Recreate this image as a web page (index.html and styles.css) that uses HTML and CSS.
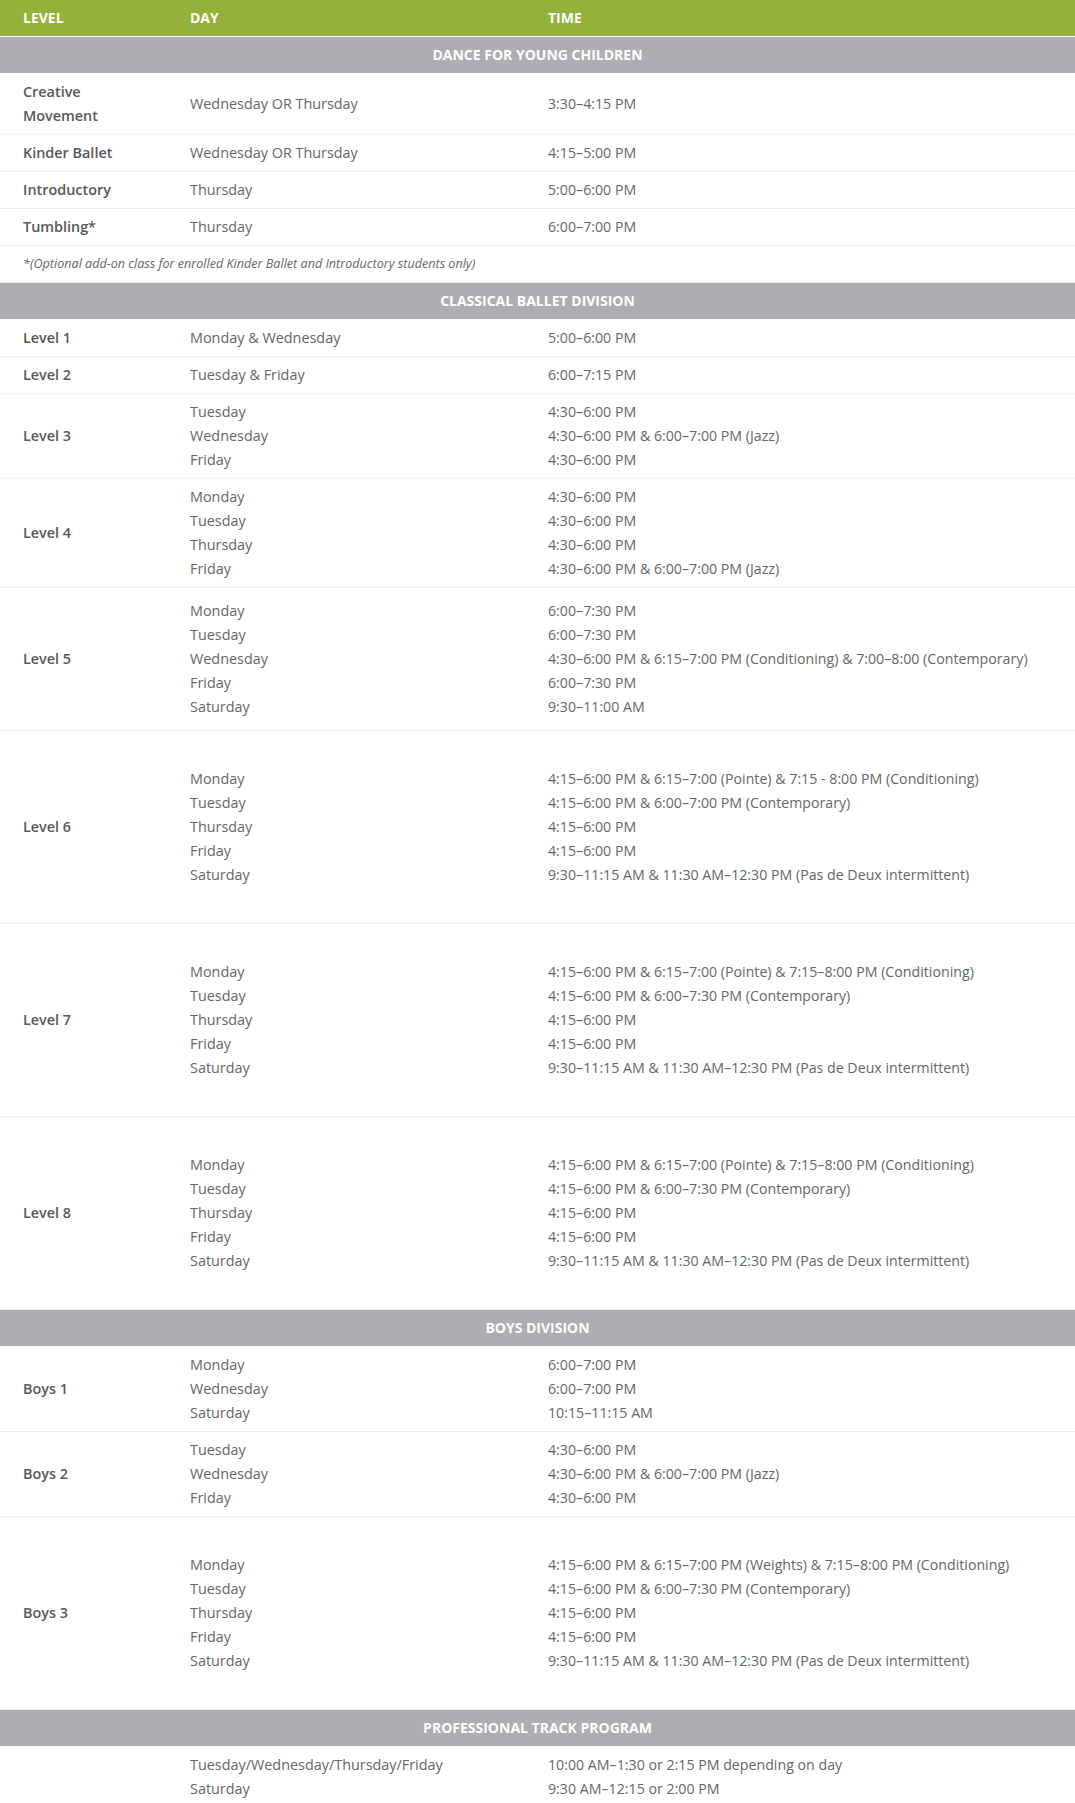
FILE: index.html
```html
<!DOCTYPE html>
<html lang="en">
<head>
<meta charset="utf-8">
<title>Class Schedule</title>
<link rel="stylesheet" href="styles.css">
</head>
<body>
<table class="schedule">
  <colgroup>
    <col class="col-level">
    <col class="col-day">
    <col class="col-time">
  </colgroup>
  <thead>
    <tr class="head">
      <th>LEVEL</th>
      <th>DAY</th>
      <th>TIME</th>
    </tr>
  </thead>
  <tbody>
    <tr class="section"><td colspan="3">DANCE FOR YOUNG CHILDREN</td></tr>
    <tr><td class="level">Creative Movement</td><td>Wednesday OR Thursday</td><td class="time">3:30–4:15 PM</td></tr>
    <tr><td class="level">Kinder Ballet</td><td>Wednesday OR Thursday</td><td class="time">4:15–5:00 PM</td></tr>
    <tr><td class="level">Introductory</td><td>Thursday</td><td class="time">5:00–6:00 PM</td></tr>
    <tr><td class="level">Tumbling*</td><td>Thursday</td><td class="time">6:00–7:00 PM</td></tr>
    <tr><td class="note" colspan="3">*(Optional add-on class for enrolled Kinder Ballet and Introductory students only)</td></tr>

    <tr class="section"><td colspan="3">CLASSICAL BALLET DIVISION</td></tr>
    <tr><td class="level">Level 1</td><td>Monday &amp; Wednesday</td><td class="time">5:00–6:00 PM</td></tr>
    <tr><td class="level">Level 2</td><td>Tuesday &amp; Friday</td><td class="time">6:00–7:15 PM</td></tr>
    <tr>
      <td class="level">Level 3</td>
      <td>Tuesday<br>Wednesday<br>Friday</td>
      <td class="time">4:30–6:00 PM<br>4:30–6:00 PM &amp; 6:00–7:00 PM (Jazz)<br>4:30–6:00 PM</td>
    </tr>
    <tr>
      <td class="level">Level 4</td>
      <td>Monday<br>Tuesday<br>Thursday<br>Friday</td>
      <td class="time">4:30–6:00 PM<br>4:30–6:00 PM<br>4:30–6:00 PM<br>4:30–6:00 PM &amp; 6:00–7:00 PM (Jazz)</td>
    </tr>
    <tr class="mid">
      <td class="level">Level 5</td>
      <td>Monday<br>Tuesday<br>Wednesday<br>Friday<br>Saturday</td>
      <td class="time">6:00–7:30 PM<br>6:00–7:30 PM<br>4:30–6:00 PM &amp; 6:15–7:00 PM (Conditioning) &amp; 7:00–8:00 (Contemporary)<br>6:00–7:30 PM<br>9:30–11:00 AM</td>
    </tr>
    <tr class="tall">
      <td class="level">Level 6</td>
      <td>Monday<br>Tuesday<br>Thursday<br>Friday<br>Saturday</td>
      <td class="time">4:15–6:00 PM &amp; 6:15–7:00 (Pointe) &amp; 7:15 - 8:00 PM (Conditioning)<br>4:15–6:00 PM &amp; 6:00–7:00 PM (Contemporary)<br>4:15–6:00 PM<br>4:15–6:00 PM<br>9:30–11:15 AM &amp; 11:30 AM–12:30 PM (Pas de Deux intermittent)</td>
    </tr>
    <tr class="tall">
      <td class="level">Level 7</td>
      <td>Monday<br>Tuesday<br>Thursday<br>Friday<br>Saturday</td>
      <td class="time">4:15–6:00 PM &amp; 6:15–7:00 (Pointe) &amp; 7:15–8:00 PM (Conditioning)<br>4:15–6:00 PM &amp; 6:00–7:30 PM (Contemporary)<br>4:15–6:00 PM<br>4:15–6:00 PM<br>9:30–11:15 AM &amp; 11:30 AM–12:30 PM (Pas de Deux intermittent)</td>
    </tr>
    <tr class="tall">
      <td class="level">Level 8</td>
      <td>Monday<br>Tuesday<br>Thursday<br>Friday<br>Saturday</td>
      <td class="time">4:15–6:00 PM &amp; 6:15–7:00 (Pointe) &amp; 7:15–8:00 PM (Conditioning)<br>4:15–6:00 PM &amp; 6:00–7:30 PM (Contemporary)<br>4:15–6:00 PM<br>4:15–6:00 PM<br>9:30–11:15 AM &amp; 11:30 AM–12:30 PM (Pas de Deux intermittent)</td>
    </tr>

    <tr class="section"><td colspan="3">BOYS DIVISION</td></tr>
    <tr>
      <td class="level">Boys 1</td>
      <td>Monday<br>Wednesday<br>Saturday</td>
      <td class="time">6:00–7:00 PM<br>6:00–7:00 PM<br>10:15–11:15 AM</td>
    </tr>
    <tr>
      <td class="level">Boys 2</td>
      <td>Tuesday<br>Wednesday<br>Friday</td>
      <td class="time">4:30–6:00 PM<br>4:30–6:00 PM &amp; 6:00–7:00 PM (Jazz)<br>4:30–6:00 PM</td>
    </tr>
    <tr class="tall">
      <td class="level">Boys 3</td>
      <td>Monday<br>Tuesday<br>Thursday<br>Friday<br>Saturday</td>
      <td class="time">4:15–6:00 PM &amp; 6:15–7:00 PM (Weights) &amp; 7:15–8:00 PM (Conditioning)<br>4:15–6:00 PM &amp; 6:00–7:30 PM (Contemporary)<br>4:15–6:00 PM<br>4:15–6:00 PM<br>9:30–11:15 AM &amp; 11:30 AM–12:30 PM (Pas de Deux intermittent)</td>
    </tr>

    <tr class="section"><td colspan="3">PROFESSIONAL TRACK PROGRAM</td></tr>
    <tr>
      <td class="level"></td>
      <td>Tuesday/Wednesday/Thursday/Friday<br>Saturday</td>
      <td class="time">10:00 AM–1:30 or 2:15 PM depending on day<br>9:30 AM–12:15 or 2:00 PM</td>
    </tr>
  </tbody>
</table>
</body>
</html>
```

FILE: styles.css
```css
html, body {
  margin: 0;
  padding: 0;
  background: #ffffff;
}

body {
  font-family: "Open Sans", "Liberation Sans", Arial, sans-serif;
  font-size: 14.4px;
  line-height: 24px;
  color: #666666;
}

.schedule {
  width: 100%;
  table-layout: fixed;
  border-collapse: separate;
  border-spacing: 0;
}

.col-level { width: 167px; }
.col-day { width: 358px; }
.col-time { width: auto; }

.schedule th,
.schedule td {
  padding: 6px 23px;
  text-align: left;
  vertical-align: middle;
  border-bottom: 1px solid #ececec;
}

.schedule tr:first-child td {
  padding-top: 6px;
}

.head th {
  background: #94b23a;
  color: #ffffff;
  font-size: 14px;
  font-weight: 700;
  border-bottom: 1px solid #ffffff;
}

.section td {
  background: #adaeb1;
  color: #ffffff;
  font-size: 14px;
  font-weight: 700;
  text-align: center;
  border-bottom: 1px solid #ffffff;
}

.level {
  font-weight: 600;
  color: #585858;
}

.time {
  font-size: 14.2px;
}

.note {
  font-size: 12.6px;
  font-style: italic;
  color: #666666;
}

.mid td {
  padding-top: 11px;
  padding-bottom: 11px;
}

.tall td {
  padding-top: 36px;
  padding-bottom: 36px;
}
```
